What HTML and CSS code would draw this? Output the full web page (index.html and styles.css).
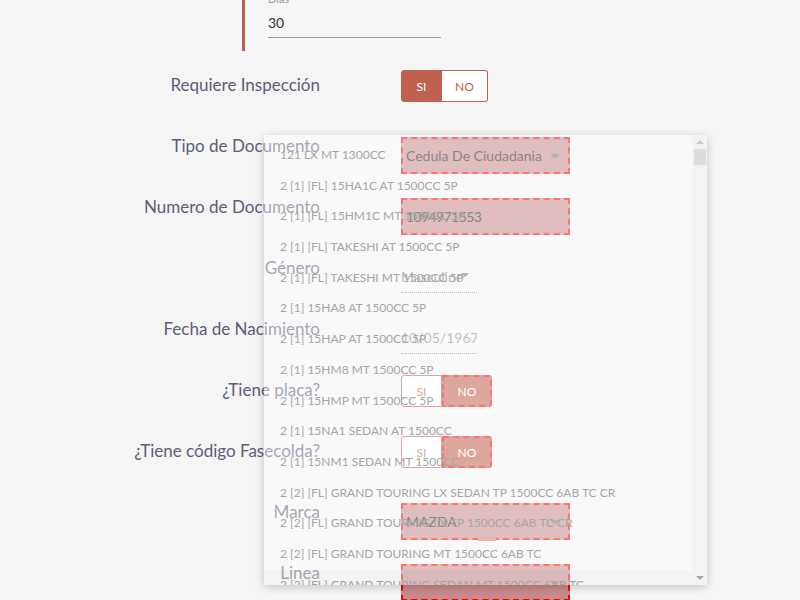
FILE: index.html
```html
<!DOCTYPE html>
<html lang="es">
<head>
<meta charset="utf-8">
<title>Formulario</title>
<link rel="stylesheet" href="styles.css">
</head>
<body>
<div class="page">
  <section class="top">
    <div class="tiny-label">Días</div>
    <div class="line-input">30</div>
  </section>

  <div class="form">
    <div class="row">
      <div class="lbl">Requiere Inspección</div>
      <div class="ctl">
        <div class="toggle"><span class="opt si on">SI</span><span class="opt no">NO</span></div>
      </div>
    </div>
    <div class="row">
      <div class="lbl">Tipo de Documento</div>
      <div class="ctl box">
        <div class="field error">Cedula De Ciudadania<span class="caret"></span></div>
      </div>
    </div>
    <div class="row">
      <div class="lbl">Numero de Documento</div>
      <div class="ctl box">
        <div class="field error number">1094971553</div>
      </div>
    </div>
    <div class="row">
      <div class="lbl">Género</div>
      <div class="ctl">
        <div class="dotted">Masculino<span class="caret small"></span></div>
      </div>
    </div>
    <div class="row">
      <div class="lbl">Fecha de Nacimiento</div>
      <div class="ctl">
        <div class="dotted muted">10/05/1967</div>
      </div>
    </div>
    <div class="row">
      <div class="lbl">¿Tiene placa?</div>
      <div class="ctl">
        <div class="toggle"><span class="opt si">SI</span><span class="opt no on error">NO</span></div>
      </div>
    </div>
    <div class="row">
      <div class="lbl">¿Tiene código Fasecolda?</div>
      <div class="ctl">
        <div class="toggle"><span class="opt si">SI</span><span class="opt no on error">NO</span></div>
      </div>
    </div>
    <div class="row">
      <div class="lbl">Marca</div>
      <div class="ctl box">
        <div class="field error">MAZDA<span class="caret"></span></div>
        <span class="tip"></span>
      </div>
    </div>
    <div class="row">
      <div class="lbl">Linea</div>
      <div class="ctl box">
        <div class="field error"><span class="caret"></span></div>
      </div>
    </div>
  </div>

  <div class="dropdown">
    <ul class="list">
      <li>121 LX MT 1300CC</li>
      <li>2 [1] [FL] 15HA1C AT 1500CC 5P</li>
      <li>2 [1] [FL] 15HM1C MT 1500CC 5P</li>
      <li>2 [1] [FL] TAKESHI AT 1500CC 5P</li>
      <li>2 [1] [FL] TAKESHI MT 1500CC 5P</li>
      <li>2 [1] 15HA8 AT 1500CC 5P</li>
      <li>2 [1] 15HAP AT 1500CC 5P</li>
      <li>2 [1] 15HM8 MT 1500CC 5P</li>
      <li>2 [1] 15HMP MT 1500CC 5P</li>
      <li>2 [1] 15NA1 SEDAN AT 1500CC</li>
      <li>2 [1] 15NM1 SEDAN MT 1500CC</li>
      <li>2 [2] [FL] GRAND TOURING LX SEDAN TP 1500CC 6AB TC CR</li>
      <li>2 [2] [FL] GRAND TOURING LX TP 1500CC 6AB TC CR</li>
      <li>2 [2] [FL] GRAND TOURING MT 1500CC 6AB TC</li>
      <li>2 [2] [FL] GRAND TOURING SEDAN MT 1500CC 6AB TC</li>
    </ul>
    <div class="vscroll">
      <span class="arrow up"></span>
      <span class="thumb"></span>
      <span class="spacer"></span>
      <span class="arrow down"></span>
    </div>
    <div class="hscroll"></div>
  </div>
</div>
</body>
</html>
```

FILE: styles.css
```css
html, body {
  margin: 0;
  padding: 0;
  height: 100%;
  overflow: hidden;
}
body {
  background: #f5f5f5;
  font-family: Lato, "Open Sans", sans-serif;
  color: #333;
}
.page {
  position: relative;
  display: flow-root;
  height: 600px;
}

/* top card fragment */
.top {
  margin: -7px 0 0 242px;
  border-left: 3px solid #c0604e;
  padding: 0 0 13px 23px;
}
.tiny-label {
  font-size: 11px;
  line-height: 12px;
  height: 9px;
  color: #9a9a9a;
}
.line-input {
  width: 173px;
  box-sizing: border-box;
  height: 36px;
  padding-top: 11px;
  font-size: 14px;
  line-height: 20px;
  color: #333;
  border-bottom: 1px solid #9a9a9a;
}

/* form */
.form {
  margin-top: 19px;
}
.row {
  display: flex;
  align-items: flex-start;
  height: 61px;
}
.lbl {
  width: 320px;
  text-align: right;
  padding-top: 5px;
  font-size: 17px;
  line-height: 20px;
  color: #5a6079;
  white-space: nowrap;
}
.ctl {
  margin-left: 81px;
  position: relative;
}
.ctl.box {
  margin-top: 6px;
}

.toggle {
  display: flex;
  height: 32px;
  font-size: 12px;
}
.opt {
  display: flex;
  align-items: center;
  justify-content: center;
  box-sizing: border-box;
  border: 1px solid #c0604e;
  background: #fff;
  color: #c0604e;
}
.opt.si {
  width: 41px;
  border-radius: 3px 0 0 3px;
}
.opt.no {
  width: 46px;
  border-left: none;
  border-radius: 0 3px 3px 0;
}
.opt.on {
  background: #c0604e;
  color: #fff;
}
.opt.no.error {
  width: 50px;
  border: 2px dashed #ff0000;
}

.field {
  position: relative;
  width: 169px;
  height: 37px;
  box-sizing: border-box;
  display: flex;
  align-items: center;
  padding: 0 3px;
  font-size: 14px;
  color: #222;
}
.field.number {
  letter-spacing: -0.6px;
}
.field.error {
  border: 2px dashed #ff0000;
  background: #c7898c;
}
.caret {
  position: absolute;
  right: 8px;
  top: 50%;
  margin-top: -2px;
  border-left: 5px solid transparent;
  border-right: 5px solid transparent;
  border-top: 5px solid #777;
}
.caret.small {
  right: 8px;
  top: 22px;
  border-left-width: 4px;
  border-right-width: 4px;
  border-top-width: 4px;
}
.tip {
  position: absolute;
  left: 77px;
  top: 35px;
  width: 18px;
  height: 3px;
  background: #d97a5c;
}

.dotted {
  position: relative;
  width: 76px;
  height: 40px;
  box-sizing: border-box;
  padding-top: 14px;
  font-size: 14px;
  line-height: 20px;
  color: #7a7a7a;
  border-bottom: 1px dotted #888;
  overflow: hidden;
  white-space: nowrap;
}
.dotted.muted {
  color: #8a8a9a;
}

/* dropdown overlay */
.dropdown {
  position: absolute;
  left: 264px;
  top: 135px;
  width: 443px;
  height: 450px;
  overflow: hidden;
  background: rgba(255, 255, 255, 0.45);
  box-shadow: 0 2px 9px rgba(0, 0, 0, 0.2);
}
.list {
  list-style: none;
  margin: 0;
  padding: 5px 0 0 16px;
}
.list li {
  height: 30.7px;
  line-height: 30.7px;
  font-size: 12px;
  color: #a6a6a6;
  white-space: nowrap;
}
.vscroll {
  position: absolute;
  right: 0;
  top: 0;
  bottom: 0;
  width: 15px;
  display: flex;
  flex-direction: column;
  align-items: center;
  background: rgba(0, 0, 0, 0.025);
}
.arrow {
  width: 0;
  height: 0;
  border-left: 4px solid transparent;
  border-right: 4px solid transparent;
}
.arrow.up {
  margin-top: 5px;
  border-bottom: 4px solid #c8c8c8;
}
.arrow.down {
  margin-bottom: 5px;
  border-top: 4px solid #a8a8a8;
}
.thumb {
  margin-top: 5px;
  width: 12px;
  height: 16px;
  background: #dcdcdc;
}
.spacer {
  flex: 1;
}
.hscroll {
  position: absolute;
  left: 0;
  right: 15px;
  bottom: 0;
  height: 15px;
  background: rgba(0, 0, 0, 0.025);
}
```
